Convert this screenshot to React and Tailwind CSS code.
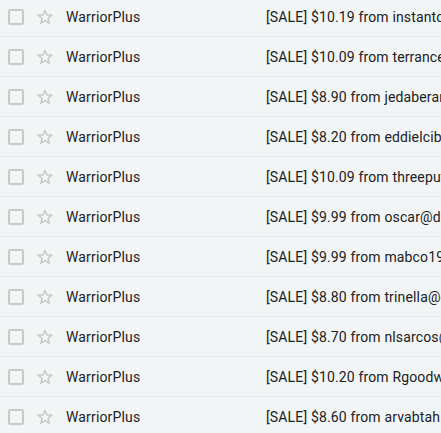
const ROWS = [
  "[SALE] $10.19 from instantonlinepayments@gmail.com",
  "[SALE] $10.09 from terrancewilliams@gmail.com",
  "[SALE] $8.90 from jedaberamos@gmail.com",
  "[SALE] $8.20 from eddielcibulka@gmail.com",
  "[SALE] $10.09 from threeputtsolutions@gmail.com",
  "[SALE] $9.99 from oscar@digitalmarketing.com",
  "[SALE] $9.99 from mabco1969@gmail.com",
  "[SALE] $8.80 from trinella@outlook.com",
  "[SALE] $8.70 from nlsarcos@gmail.com",
  "[SALE] $10.20 from Rgoodwin@gmail.com",
  "[SALE] $8.60 from arvabtahi@gmail.com",
];

function StarOutline() {
  return (
    <svg width="20" height="20" viewBox="0 0 24 24" fill="#c6c6c6">
      <path d="M22 9.24l-7.19-.62L12 2 9.19 8.63 2 9.24l5.46 4.73L5.82 21 12 17.27 18.18 21l-1.63-7.03L22 9.24zM12 15.4l-3.76 2.27 1-4.28-3.32-2.88 4.38-.38L12 6.1l1.71 4.04 4.38.38-3.32 2.88 1 4.28L12 15.4z" />
    </svg>
  );
}

export default function App() {
  return (
    <div className="w-[441px] h-[433px] overflow-hidden bg-[#f2f5f5]" style={{ fontFamily: "Roboto, 'Liberation Sans', sans-serif" }}>
      <div className="-mt-[3px]">
        {ROWS.map((subject, i) => (
          <div key={i} className="h-10 flex items-center border-b border-[#e4e7e8] text-[14px] tracking-[0.15px] text-[#202124] whitespace-nowrap">
            <div className="w-[16px] h-[16px] ml-[8px] mt-px border-2 border-[#c8c8c8] rounded-[2px] flex-shrink-0" />
            <div className="ml-[11px] flex-shrink-0 flex items-center">
              <StarOutline />
            </div>
            <div className="ml-[11px] w-[200px] pt-[2px] flex-shrink-0">WarriorPlus</div>
            <div className="flex-1 pt-[2px] overflow-hidden">{subject}</div>
          </div>
        ))}
      </div>
    </div>
  );
}
